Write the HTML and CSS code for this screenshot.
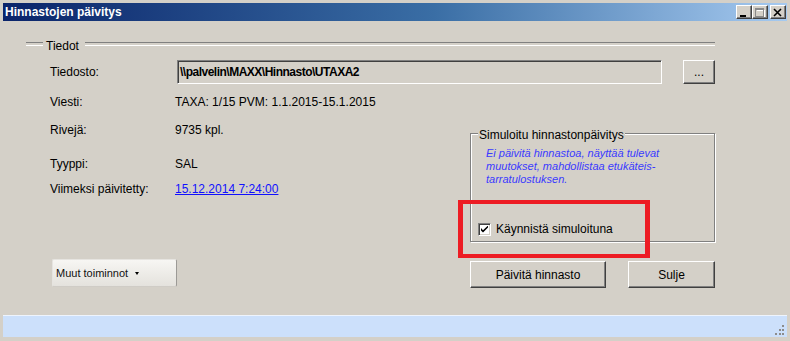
FILE: index.html
```html
<!DOCTYPE html>
<html lang="fi">
<head>
    <meta charset="UTF-8">
    <meta name="viewport" content="width=device-width, initial-scale=1.0">
    <title>Hinnastojen päivitys</title>
    <link rel="stylesheet" href="styles.css">
</head>
<body>
    <div class="window">
        <div class="titlebar">
            <span class="title">Hinnastojen päivitys</span>
            <div class="caption-buttons">
                <span class="cap-btn">
                    <svg width="10" height="9" viewBox="0 0 10 9"><rect x="1" y="7" width="6" height="2" fill="#000"/></svg>
                </span>
                <span class="cap-btn">
                    <svg width="10" height="9" viewBox="0 0 10 9">
                        <path d="M2 2.5H10M9.5 2V9M2 9.5H10" stroke="#fff" fill="none"/>
                        <rect x="0.5" y="0.5" width="8" height="8" fill="none" stroke="#8a8a8a"/>
                        <rect x="1" y="1" width="7" height="1" fill="#8a8a8a"/>
                    </svg>
                </span>
                <span class="cap-btn close-cap">
                    <svg width="10" height="9" viewBox="0 0 10 9"><path d="M1 1L8 8M8 1L1 8" stroke="#000" stroke-width="1.6" fill="none"/></svg>
                </span>
            </div>
        </div>

        <div class="content">
            <div class="group-head"><span>Tiedot</span></div>
            <div class="fields">
                <div class="file-row">
                    <span class="label">Tiedosto:</span>
                    <div class="path-box">\\palvelin\MAXX\Hinnasto\UTAXA2</div>
                    <button class="btn browse">...</button>
                </div>

                <div class="lower">
                    <div class="info">
                        <div class="row r-viesti"><span class="label">Viesti:</span><span>TAXA: 1/15 PVM: 1.1.2015-15.1.2015</span></div>
                        <div class="row r-rivit"><span class="label">Rivejä:</span><span>9735 kpl.</span></div>
                        <div class="row r-tyyppi"><span class="label">Tyyppi:</span><span>SAL</span></div>
                        <div class="row r-pvm"><span class="label">Viimeksi päivitetty:</span><a href="#" class="date-link">15.12.2014 7:24:00</a></div>
                        <button class="menu-btn">Muut toiminnot<span class="caret"></span></button>
                    </div>

                    <div class="side">
                        <div class="simbox">
                            <div class="simbox-title">Simuloitu hinnastonpäivitys</div>
                            <p class="sim-note">Ei päivitä hinnastoa, näyttää tulevat<br>muutokset, mahdollistaa etukäteis-<br>tarratulostuksen.</p>
                            <label class="check-row">
                                <span class="checkbox">
                                    <svg width="7" height="7" viewBox="0 0 7 7"><path d="M0 2V4.5L2 6.5L7 1.5V-0.5L2 4.3Z" fill="#000"/></svg>
                                </span>
                                Käynnistä simuloituna
                            </label>
                        </div>
                        <div class="actions">
                            <button class="btn update-btn">Päivitä hinnasto</button>
                            <button class="btn close-btn">Sulje</button>
                        </div>
                    </div>
                </div>
            </div>
        </div>

        <div class="statusbar">
            <svg class="grip" width="12" height="12" viewBox="0 0 12 12" fill="#8c8c8c">
                <rect x="8" y="1" width="2" height="2"/>
                <rect x="5" y="5" width="2" height="2"/>
                <rect x="8" y="5" width="2" height="2"/>
                <rect x="1" y="9" width="2" height="2"/>
                <rect x="5" y="9" width="2" height="2"/>
                <rect x="8" y="9" width="2" height="2"/>
            </svg>
        </div>

        <!-- red annotation box -->
        <div class="highlight"></div>
    </div>
</body>
</html>
```

FILE: styles.css
```css
* {
    box-sizing: border-box;
}
body {
    margin: 0;
    background-color: #d4d0c8;
    font-family: "Liberation Sans", Arial, sans-serif;
    font-size: 12px;
    color: #000;
}
.window {
    position: relative; /* for the annotation box */
    width: 790px;
    height: 341px;
    padding: 3px 3px 4px 3px;
    display: flex;
    flex-direction: column;
    background-color: #d4d0c8;
}
.titlebar {
    height: 18px;
    display: flex;
    align-items: center;
    justify-content: space-between;
    padding: 0 1px 0 2px;
    background: linear-gradient(to right, #0a246a, #3a6ea5 55%, #a6caf0);
}
.title {
    color: #fff;
    font-weight: bold;
    font-size: 12px;
}
.caption-buttons {
    display: flex;
}
.cap-btn {
    width: 16px;
    height: 14px;
    display: flex;
    align-items: center;
    justify-content: center;
    background-color: #d4d0c8;
    border: 1px solid;
    border-color: #fff #404040 #404040 #fff;
    box-shadow: inset -1px -1px 0 #808080;
}
.close-cap {
    margin-left: 2px;
}
.content {
    flex: 1;
    padding: 18px 0 0 23px;
}
.group-head {
    width: 689px;
    height: 14px;
    display: flex;
    align-items: center;
}
.group-head::before,
.group-head::after {
    content: "";
    height: 2px;
    border-top: 1px solid #808080;
    border-bottom: 1px solid #fff;
    margin-bottom: 4px;
}
.group-head::before {
    width: 17px;
    margin-right: 3px;
}
.group-head::after {
    flex: 1;
    margin-left: 6px;
}
.fields {
    padding-left: 24px;
}
.file-row {
    margin-top: 7px;
    height: 24px;
    display: flex;
    align-items: center;
}
.file-row .label {
    width: 127px;
}
.path-box {
    width: 485px;
    height: 24px;
    display: flex;
    align-items: center;
    padding-left: 2px;
    border: 1px solid;
    border-color: #808080 #fff #fff #808080;
    box-shadow: inset 1px 1px 0 #404040;
    font-weight: bold;
    letter-spacing: -0.5px;
}
.btn {
    background-color: #d4d0c8;
    border: 1px solid;
    border-color: #fff #404040 #404040 #fff;
    box-shadow: inset -1px -1px 0 #808080;
    font-family: "Liberation Sans", Arial, sans-serif;
    font-size: 12px;
    color: #000;
    padding: 0;
    cursor: pointer;
}
.browse {
    width: 32px;
    height: 24px;
    margin-left: 21px;
}
.lower {
    display: flex;
}
.info {
    width: 420px;
}
.row {
    height: 24px;
    display: flex;
    align-items: center;
}
.row .label {
    width: 125px;
}
.r-viesti { margin-top: 6px; }
.r-rivit { margin-top: 4px; }
.r-tyyppi { margin-top: 10px; }
.r-pvm { margin-top: 1px; }
.date-link {
    color: #1010ff;
    text-decoration: underline;
}
.menu-btn {
    display: flex;
    align-items: center;
    width: 125px;
    height: 28px;
    margin: 58px 0 0 2px;
    padding: 0 0 0 3px;
    background: linear-gradient(#f7f6f3, #e4e2dd);
    border: 1px solid #e6e4e0;
    border-right-color: #9c9a96;
    border-bottom-color: #cfccc6;
    border-radius: 2px;
    font-family: "Liberation Sans", Arial, sans-serif;
    font-size: 11px;
    color: #111;
    cursor: pointer;
}
.caret {
    margin-left: 7px;
    margin-top: 1px;
    border-left: 2.5px solid transparent;
    border-right: 2.5px solid transparent;
    border-top: 3px solid #000;
}
.side {
    width: 245px;
}
.simbox {
    margin-top: 49px;
    border: 1px solid #808080;
    box-shadow: 1px 1px 0 #fff, inset 1px 1px 0 #fff;
    padding-bottom: 5px;
}
.simbox-title {
    width: max-content;
    margin: -6px 0 0 7px;
    padding: 0 1px;
    line-height: 14px;
    background-color: #d4d0c8;
}
.sim-note {
    margin: 5px 0 0 15px;
    font-size: 11px;
    line-height: 13px;
    font-style: italic;
    color: #3a3aff;
}
.check-row {
    height: 14px;
    margin: 36px 0 0 7px;
    display: flex;
    align-items: center;
}
.checkbox {
    width: 13px;
    height: 13px;
    margin-right: 5px;
    display: flex;
    align-items: center;
    justify-content: center;
    background-color: #fff;
    border: 1px solid;
    border-color: #808080 #fff #fff #808080;
    box-shadow: inset 1px 1px 0 #404040, inset -1px -1px 0 #d4d0c8;
}
.actions {
    display: flex;
    gap: 22px;
    margin-top: 19px;
}
.update-btn {
    width: 136px;
    height: 27px;
}
.close-btn {
    width: 87px;
    height: 27px;
}
.statusbar {
    height: 22px;
    border-top: 1px solid #eef4fd;
    background-color: #cce0fb;
    display: flex;
    justify-content: flex-end;
    align-items: flex-end;
    padding: 0 1px 1px 0;
}
.highlight {
    position: absolute;
    left: 458px;
    top: 200px;
    width: 192px;
    height: 58px;
    border: solid #ed1c24;
    border-width: 4px 5px 4px 5px;
}
```
